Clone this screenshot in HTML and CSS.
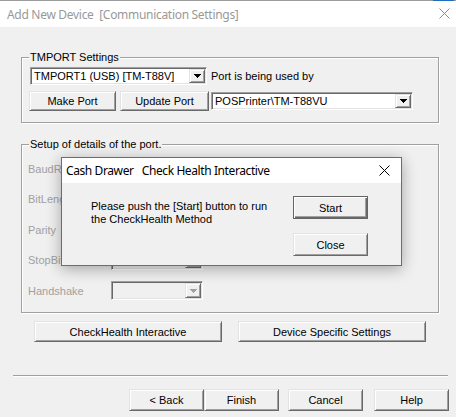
FILE: index.html
```html
<!DOCTYPE html>
<html>
<head>
<meta charset="utf-8">
<link rel="stylesheet" href="styles.css">
</head>
<body>
<div class="window">
  <div class="topline"><span class="tl-gray"></span><span class="tl-blue"></span><span class="tl-rest"></span></div>
  <div class="titlebar">
    <span class="title">Add New Device&nbsp; [Communication Settings]</span>
    <svg class="close-x" width="11" height="11" viewBox="0 0 11 11"><path d="M0.5 0.5 L10.5 10.5 M10.5 0.5 L0.5 10.5" stroke="#8a8a8a" stroke-width="1" fill="none"/></svg>
  </div>
  <div class="client">
    <fieldset class="group group-tmport">
      <legend>TMPORT Settings</legend>
      <div class="row row-1">
        <div class="combo combo-port"><span class="combo-text">TMPORT1 (USB) [TM-T88V]</span><span class="combo-btn"><svg width="7" height="4" viewBox="0 0 7 4"><path d="M0 0h7v1h-1v1h-1v1h-1v1h-1v-1h-1v-1h-1v-1h-1z" fill="#000"/></svg></span></div>
        <span class="used-by">Port is being used by</span>
      </div>
      <div class="row row-2">
        <button class="btn btn-make">Make Port</button>
        <button class="btn btn-update">Update Port</button>
        <div class="combo combo-used"><span class="combo-text">POSPrinter\TM-T88VU</span><span class="combo-btn"><svg width="7" height="4" viewBox="0 0 7 4"><path d="M0 0h7v1h-1v1h-1v1h-1v1h-1v-1h-1v-1h-1v-1h-1z" fill="#000"/></svg></span></div>
      </div>
    </fieldset>

    <fieldset class="group group-setup">
      <legend>Setup of details of the port.</legend>
      <div class="setup-grid">
        <span class="lbl">BaudRate</span>
        <div class="combo combo-disabled"><span class="combo-text"></span><span class="combo-btn"><svg width="7" height="4" viewBox="0 0 7 4"><path d="M0 0h7v1h-1v1h-1v1h-1v1h-1v-1h-1v-1h-1v-1h-1z" fill="#a0a0a0"/></svg></span></div>
        <span class="lbl">BitLength</span>
        <div class="combo combo-disabled"><span class="combo-text"></span><span class="combo-btn"><svg width="7" height="4" viewBox="0 0 7 4"><path d="M0 0h7v1h-1v1h-1v1h-1v1h-1v-1h-1v-1h-1v-1h-1z" fill="#a0a0a0"/></svg></span></div>
        <span class="lbl">Parity</span>
        <div class="combo combo-disabled"><span class="combo-text"></span><span class="combo-btn"><svg width="7" height="4" viewBox="0 0 7 4"><path d="M0 0h7v1h-1v1h-1v1h-1v1h-1v-1h-1v-1h-1v-1h-1z" fill="#a0a0a0"/></svg></span></div>
        <span class="lbl">StopBits</span>
        <div class="combo combo-disabled"><span class="combo-text"></span><span class="combo-btn"><svg width="7" height="4" viewBox="0 0 7 4"><path d="M0 0h7v1h-1v1h-1v1h-1v1h-1v-1h-1v-1h-1v-1h-1z" fill="#a0a0a0"/></svg></span></div>
        <span class="lbl">Handshake</span>
        <div class="combo combo-disabled"><span class="combo-text"></span><span class="combo-btn"><svg width="7" height="4" viewBox="0 0 7 4"><path d="M0 0h7v1h-1v1h-1v1h-1v1h-1v-1h-1v-1h-1v-1h-1z" fill="#a0a0a0"/></svg></span></div>
      </div>
    </fieldset>

    <div class="action-row">
      <button class="btn btn-wide">CheckHealth Interactive</button>
      <button class="btn btn-wide">Device Specific Settings</button>
    </div>

    <div class="separator"></div>

    <div class="wizard-row">
      <button class="btn btn-wiz">&lt; Back</button>
      <button class="btn btn-wiz">Finish</button>
      <button class="btn btn-wiz btn-cancel">Cancel</button>
      <button class="btn btn-wiz btn-help">Help</button>
    </div>
  </div>

  <div class="dialog">
    <div class="dlg-title">
      <span class="dlg-caption">Cash Drawer&nbsp;&nbsp; Check Health Interactive</span>
      <svg class="dlg-x" width="11" height="11" viewBox="0 0 11 11"><path d="M0.5 0.5 L10.5 10.5 M10.5 0.5 L0.5 10.5" stroke="#000" stroke-width="1" fill="none"/></svg>
    </div>
    <div class="dlg-body">
      <p class="dlg-text">Please push the [Start] button to run<br>the CheckHealth Method</p>
      <div class="dlg-buttons">
        <button class="btn btn-dlg btn-default">Start</button>
        <button class="btn btn-dlg">Close</button>
      </div>
    </div>
  </div>
</div>
</body>
</html>
```

FILE: styles.css
```css
html, body {
  margin: 0;
  padding: 0;
}
body {
  width: 456px;
  height: 417px;
  overflow: hidden;
  background: #f0f0f0;
  font-family: "Liberation Sans", Arial, sans-serif;
  font-size: 11px;
  color: #000;
}
.window {
  position: relative;
  width: 456px;
  height: 417px;
}
.topline {
  display: flex;
  height: 1px;
}
.tl-gray { width: 433px; background: #9c9c9c; }
.tl-blue { width: 21px; background: #1f6ec4; }
.tl-rest { flex: 1; background: #9c9c9c; }

.titlebar {
  height: 26px;
  background: #fff;
  display: flex;
  align-items: center;
  justify-content: space-between;
  padding: 0 6px 0 7px;
  font-family: "Noto Sans", "Open Sans", sans-serif;
  font-size: 12px;
  letter-spacing: -0.3px;
  color: #999;
}
.title { white-space: pre; }
.close-x { display: block; margin-top: -2px; }

.client {
  padding-top: 24px;
}

/* group boxes */
.group {
  margin: 0 0 0 21px;
  width: 418px;
  box-sizing: border-box;
  border: 1px solid #a0a0a0;
  box-shadow: 1px 1px 0 #fff, inset 1px 1px 0 #fff;
}
.group legend {
  padding: 0 1px;
  line-height: 13px;
  height: 13px;
  background: #f0f0f0;
}
.group-tmport {
  padding: 3px 8px 11px 8px;
}
.group-tmport legend { margin-left: -1px; }
.group-setup {
  margin-top: 15px;
  padding: 8px 6px 12px 6px;
}
.group-setup legend { margin-left: 1px; }

.row {
  display: flex;
  align-items: center;
}
.row-2 { margin-top: 6px; }
.used-by { margin-left: 4px; }

/* combo boxes */
.combo {
  box-sizing: border-box;
  height: 18px;
  display: flex;
  align-items: stretch;
  background: #fff;
  border: 1px solid;
  border-color: #a0a0a0 #fff #fff #a0a0a0;
  box-shadow: inset 1px 1px 0 #696969, inset -1px -1px 0 #e3e3e3;
  padding: 1px;
}
.combo-text {
  flex: 1;
  padding-left: 2px;
  line-height: 14px;
  white-space: nowrap;
  overflow: hidden;
}
.combo-btn {
  box-sizing: border-box;
  width: 16px;
  display: flex;
  align-items: center;
  justify-content: center;
  background: #f0f0f0;
  border: 1px solid;
  border-color: #e3e3e3 #696969 #696969 #e3e3e3;
  box-shadow: inset 1px 1px 0 #fff, inset -1px -1px 0 #a0a0a0;
}
.combo-btn svg { display: block; }
.combo-port { width: 177px; }
.combo-used { width: 202px; margin-left: 2px; }
.combo-disabled {
  width: 92px;
  height: 19px;
  background: #f0f0f0;
}

/* buttons */
.btn {
  box-sizing: border-box;
  margin: 0;
  padding: 0;
  font-family: "Liberation Sans", Arial, sans-serif;
  font-size: 11px;
  color: #000;
  background: #f0f0f0;
  border: 1px solid;
  border-color: #e3e3e3 #696969 #696969 #e3e3e3;
  box-shadow: inset 1px 1px 0 #fff, inset -1px -1px 0 #a0a0a0;
  text-align: center;
}
.btn-make { width: 87px; height: 20px; margin-left: -1px; }
.btn-update { width: 89px; height: 20px; margin-left: 4px; }

.setup-grid {
  display: grid;
  grid-template-columns: 83px 92px;
  grid-auto-rows: 19px;
  row-gap: 11.5px;
  align-items: center;
}
.lbl { color: #a0a0a0; }

.action-row {
  display: flex;
  gap: 16px;
  padding-left: 34px;
  margin-top: 8px;
}
.btn-wide { width: 188px; height: 21px; }

.separator {
  margin: 33px 8px 0 13px;
  height: 1px;
  background: #a0a0a0;
  border-bottom: 1px solid #fff;
}

.wizard-row {
  display: flex;
  padding-left: 129px;
  margin-top: 12px;
}
.btn-wiz { width: 75px; height: 22px; }
.btn-cancel { margin-left: 9px; }
.btn-help { margin-left: 11px; }

/* modal dialog */
.dialog {
  position: absolute;
  left: 61px;
  top: 157px;
  width: 341px;
  height: 109px;
  box-sizing: border-box;
  border: 1px solid #1883d7;
  background: #f0f0f0;
  box-shadow: 0 3px 14px rgba(0, 0, 0, 0.32);
}
.dlg-title {
  height: 25px;
  background: #fff;
  display: flex;
  align-items: center;
  justify-content: space-between;
  padding: 0 11px 0 4px;
  font-family: "Noto Sans", "Open Sans", sans-serif;
  font-size: 12px;
  letter-spacing: -0.4px;
  color: #000;
}
.dlg-caption { white-space: pre; }
.dlg-x { display: block; }
.dlg-body {
  display: flex;
  justify-content: space-between;
  padding: 13px 33px 0 29px;
}
.dlg-text {
  margin: 4px 0 0 0;
  line-height: 13px;
}
.dlg-buttons {
  display: flex;
  flex-direction: column;
  gap: 14px;
}
.btn-dlg { width: 75px; height: 23px; }
.btn-default {
  border: 1px solid #646464;
  box-shadow: inset 1px 1px 0 #fff, inset -1px -1px 0 #696969, inset -2px -2px 0 #a0a0a0;
}
```
